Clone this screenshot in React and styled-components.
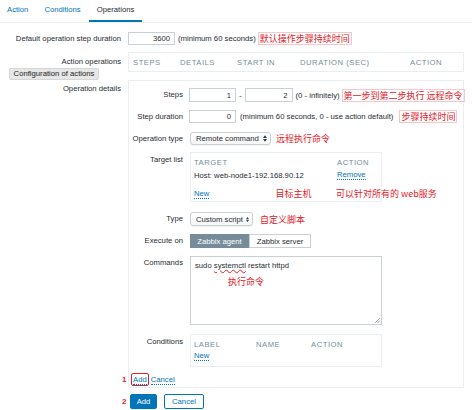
import React from 'react'
import styled, { createGlobalStyle } from 'styled-components'

const GlobalStyle = createGlobalStyle`
  html, body { margin: 0; padding: 0; background: #fff; }
  body {
    font-family: "Liberation Sans", Arial, "Noto Sans CJK SC", sans-serif;
    font-size: 7.7px;
    color: #1f2c33;
  }
  * { box-sizing: border-box; }
`

const Page = styled.div`
  width: 472px;
  height: 410px;
  overflow: hidden;
`

const TabBar = styled.div`
  display: flex;
  height: 23px;
  border-bottom: 1px solid #ebeef0;
  margin-left: -1px;
`

const Tab = styled.div`
  height: 22px;
  padding: 0 8px 2px;
  display: flex;
  align-items: center;
  color: ${p => (p.$active ? '#1f2c33' : '#0275b8')};
  border-bottom: 2px solid ${p => (p.$active ? '#0275b8' : 'transparent')};
`

const Row = styled.div`
  display: grid;
  grid-template-columns: 121px 336px;
  column-gap: 7px;
  align-items: start;
  margin-top: ${p => p.$top || 0}px;
`

const Label = styled.div`
  text-align: right;
  white-space: nowrap;
  line-height: ${p => p.$lh || 13}px;
  padding-top: ${p => p.$pt || 0}px;
`

const LabelStack = styled.div`
  display: flex;
  flex-direction: column;
  align-items: flex-end;
`

const ConfigButton = styled.div`
  align-self: flex-start;
  margin: 2px 0 0 9px;
  width: 90px;
  height: 12px;
  line-height: 10px;
  text-align: center;
  background: #e7e7e7;
  border: 1px solid #d6d6d6;
  border-radius: 2px;
  color: #222;
  white-space: nowrap;
`

const Field = styled.div`
  display: flex;
  align-items: center;
  height: ${p => p.$h || 13}px;
  white-space: nowrap;
`

const NumInput = styled.input`
  width: ${p => p.$w || 47}px;
  height: ${p => p.$h || 13}px;
  margin: 0;
  padding: 0 4px 0 0;
  border: 1px solid #c9d1d5;
  background: #fff;
  font: inherit;
  color: inherit;
  text-align: right;
  outline: none;
`

const Hint = styled.span`
  margin: 0 ${p => p.$right || 0}px 0 ${p => p.$gap ?? 3}px;
`

const Note = styled.span`
  margin-left: ${p => p.$gap ?? 2}px;
  padding: 0 1px;
  font-family: "Noto Sans CJK SC", sans-serif;
  font-size: 9px;
  line-height: 11px;
  color: #e3202a;
  border: 1px solid ${p => (p.$boxed ? 'rgba(227, 32, 42, 0.25)' : 'transparent')};
  white-space: nowrap;
`

const HeadTable = styled.div`
  display: grid;
  grid-template-columns: ${p => p.$cols};
  align-items: center;
  height: 20px;
  padding-left: 4px;
  border: 1px solid #ebeef0;
`

const Th = styled.div`
  color: #768d99;
  letter-spacing: 0.5px;
  text-transform: uppercase;
  white-space: nowrap;
`

const DetailsBox = styled.div`
  width: 336px;
  border: 1px solid #ebeef0;
  padding: 7px 0 1px;
`

const DetailRow = styled.div`
  display: grid;
  grid-template-columns: 54px 1fr;
  column-gap: 6px;
  align-items: start;
  margin-top: ${p => p.$top || 0}px;
`

const Select = styled.div`
  width: ${p => p.$w}px;
  height: ${p => p.$h || 13}px;
  margin-left: 1px;
  padding: 0 3px 0 5px;
  display: flex;
  align-items: center;
  justify-content: space-between;
  gap: 3px;
  border: 1px solid #c9d1d5;
  border-radius: 3px;
  background: linear-gradient(#ffffff, #f6f6f6);
  box-shadow: 0 1px 1px rgba(0, 0, 0, 0.06);
  white-space: nowrap;
`

const ListBox = styled.div`
  width: 192px;
  height: ${p => p.$h}px;
  margin-left: 1px;
  padding: 3px 3px 0;
  border: 1px solid #ebeef0;
`

const ListRow = styled.div`
  display: grid;
  grid-template-columns: ${p => p.$cols};
  align-items: center;
  height: 10px;
  margin-top: ${p => p.$top || 0}px;
  white-space: nowrap;
`

const Cell = styled.div`
  display: flex;
  align-items: center;
`

const Link = styled.span`
  color: #0275b8;
  border-bottom: 1px dotted #0275b8;
  line-height: 9px;
  white-space: nowrap;
`

const Segments = styled.div`
  display: flex;
  height: 14px;
  margin-left: 1px;
`

const Segment = styled.div`
  width: ${p => p.$w}px;
  display: flex;
  align-items: center;
  justify-content: center;
  border: 1px solid ${p => (p.$active ? '#768d99' : '#c9d1d5')};
  background: ${p => (p.$active ? '#768d99' : '#fff')};
  color: ${p => (p.$active ? '#fff' : '#1f2c33')};
`

const TextArea = styled.div`
  position: relative;
  width: 192px;
  height: 69px;
  margin-left: 1px;
  padding: 4px 4px;
  border: 1px solid #c9d1d5;
  line-height: 10px;
`

const Misspelt = styled.span`
  text-decoration: underline wavy #e3202a;
  text-decoration-thickness: 1px;
  text-underline-offset: 1px;
`

const AreaNote = styled.div`
  margin: 5px 0 0 33px;
  font-family: "Noto Sans CJK SC", sans-serif;
  font-size: 9px;
  line-height: 11px;
  color: #e3202a;
`

const Grip = styled.svg`
  position: absolute;
  right: 1px;
  bottom: 1px;
`

const LinksRow = styled.div`
  position: relative;
  display: flex;
  align-items: center;
  height: 13px;
  margin: 6px 0 0 2px;
`

const Marker = styled.span`
  position: absolute;
  left: ${p => p.$left}px;
  top: ${p => p.$y || 'auto'};
  color: #e3202a;
  font-weight: bold;
  font-size: 8px;
`

const BoxedLink = styled.span`
  padding: 0 1px;
  border: 1px solid #e3202a;
  border-radius: 2px;
  height: 13px;
  display: flex;
  align-items: center;
  margin-right: 2px;
`

const Buttons = styled.div`
  position: relative;
  display: flex;
  gap: 7px;
  margin-left: 2px;
`

const Button = styled.div`
  width: ${p => p.$w}px;
  height: 15px;
  display: flex;
  align-items: center;
  justify-content: center;
  border: 1px solid #0275b8;
  border-radius: 2px;
  background: ${p => (p.$primary ? '#0275b8' : '#fff')};
  color: ${p => (p.$primary ? '#fff' : '#0275b8')};
`

const Arrows = () => (
  <svg width="4" height="7" viewBox="0 0 4 7">
    <path d="M0 3L2 0.3L4 3Z M0 4L2 6.7L4 4Z" fill="#2a3a42" />
  </svg>
)

export default function App() {
  return (
    <Page>
      <GlobalStyle />
      <TabBar>
        <Tab>Action</Tab>
        <Tab>Conditions</Tab>
        <Tab $active>Operations</Tab>
      </TabBar>

      <Row $top={9}>
        <Label>Default operation step duration</Label>
        <Field>
          <NumInput $w={47} defaultValue="3600" />
          <Hint>(minimum 60 seconds)</Hint>
          <Note $boxed>默认操作步骤持续时间</Note>
        </Field>
      </Row>

      <Row $top={7}>
        <LabelStack>
          <Label $lh={9} $pt={5}>Action operations</Label>
          <ConfigButton>Configuration of actions</ConfigButton>
        </LabelStack>
        <HeadTable $cols="47px 57px 63px 110px 1fr">
          <Th>Steps</Th>
          <Th>Details</Th>
          <Th>Start in</Th>
          <Th>Duration (sec)</Th>
          <Th>Action</Th>
        </HeadTable>
      </Row>

      <Row>
        <Label $lh={9} $pt={3.5}>Operation details</Label>
        <DetailsBox>
          <DetailRow>
            <Label $lh={14}>Steps</Label>
            <Field $h={14}>
              <NumInput $w={47} $h={14} defaultValue="1" />
              <Hint $right={3}>-</Hint>
              <NumInput $w={48} $h={14} defaultValue="2" />
              <Hint>(0 - infinitely)</Hint>
              <Note $boxed>第一步到第二步执行 远程命令</Note>
            </Field>
          </DetailRow>

          <DetailRow $top={8}>
            <Label>Step duration</Label>
            <Field>
              <NumInput $w={47} defaultValue="0" />
              <Hint $gap={4}>(minimum 60 seconds, 0 - use action default)</Hint>
              <Note $boxed $gap={6}>步骤持续时间</Note>
            </Field>
          </DetailRow>

          <DetailRow $top={9}>
            <Label>Operation type</Label>
            <Field>
              <Select $w={81}>
                <span>Remote command</span>
                <Arrows />
              </Select>
              <Note $gap={3}>远程执行命令</Note>
            </Field>
          </DetailRow>

          <DetailRow $top={7}>
            <Label $lh={10} $pt={3}>Target list</Label>
            <ListBox $h={50}>
              <ListRow $cols="143px 1fr" $top={1}>
                <Th>Target</Th>
                <Th>Action</Th>
              </ListRow>
              <ListRow $cols="143px 1fr" $top={3}>
                <span>Host: web-node1-192.168.90.12</span>
                <Cell><Link>Remove</Link></Cell>
              </ListRow>
              <ListRow $cols="143px 1fr" $top={7}>
                <Cell>
                  <Link>New</Link>
                  <Note $gap={64}>目标主机</Note>
                </Cell>
                <Cell>
                  <Note $gap={-3}>可以针对所有的 web服务</Note>
                </Cell>
              </ListRow>
            </ListBox>
          </DetailRow>

          <DetailRow $top={10}>
            <Label $lh={14}>Type</Label>
            <Field $h={14}>
              <Select $w={63} $h={14}>
                <span>Custom script</span>
                <Arrows />
              </Select>
              <Note $gap={5}>自定义脚本</Note>
            </Field>
          </DetailRow>

          <DetailRow $top={8}>
            <Label $lh={14}>Execute on</Label>
            <Segments>
              <Segment $w={59} $active>Zabbix agent</Segment>
              <Segment $w={62}>Zabbix server</Segment>
            </Segments>
          </DetailRow>

          <DetailRow $top={8}>
            <Label $lh={10} $pt={2}>Commands</Label>
            <TextArea>
              sudo <Misspelt>systemctl</Misspelt> restart httpd
              <AreaNote>执行命令</AreaNote>
              <Grip width="6" height="6" viewBox="0 0 6 6">
                <path d="M1 6L6 1 M3.5 6L6 3.5" stroke="#9aa5ab" strokeWidth="0.8" />
              </Grip>
            </TextArea>
          </DetailRow>

          <DetailRow $top={9}>
            <Label $lh={10} $pt={3}>Conditions</Label>
            <ListBox $h={33}>
              <ListRow $cols="62px 55px 1fr" $top={1}>
                <Th>Label</Th>
                <Th>Name</Th>
                <Th>Action</Th>
              </ListRow>
              <ListRow $cols="62px 1fr" $top={2}>
                <Cell><Link>New</Link></Cell>
              </ListRow>
            </ListBox>
          </DetailRow>

          <LinksRow>
            <Marker $left={-9}>1</Marker>
            <BoxedLink><Link>Add</Link></BoxedLink>
            <Link>Cancel</Link>
          </LinksRow>
        </DetailsBox>
      </Row>

      <Row $top={6}>
        <div />
        <Buttons>
          <Marker $left={-8} $y="3px">2</Marker>
          <Button $w={27} $primary>Add</Button>
          <Button $w={40}>Cancel</Button>
        </Buttons>
      </Row>
    </Page>
  )
}
